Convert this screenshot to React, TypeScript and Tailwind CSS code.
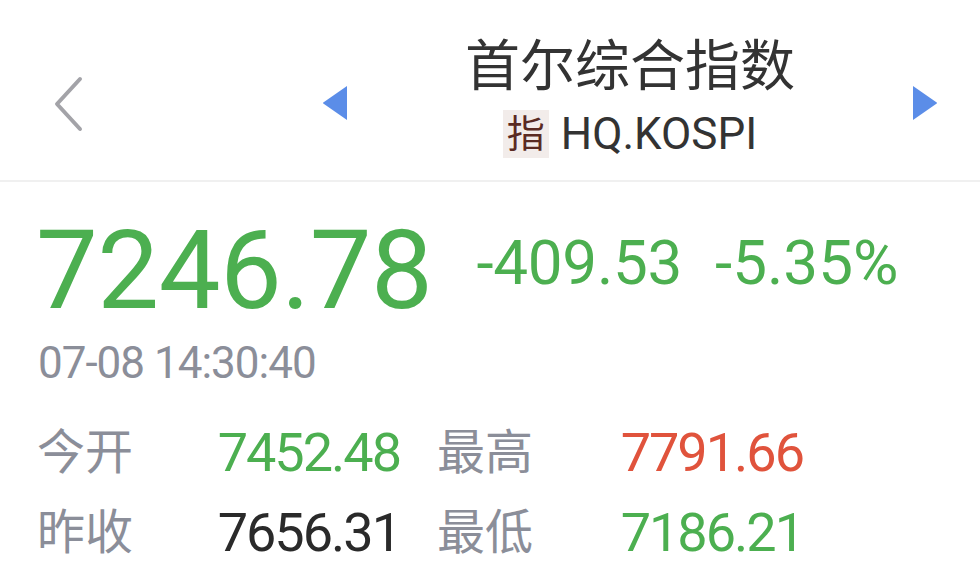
const FONT = { fontFamily: 'Roboto, "Noto Sans CJK SC", sans-serif' };

type Cell = { label: string; value: string; color: string };

const rows: [Cell, Cell][] = [
  [
    { label: '今开', value: '7452.48', color: 'text-[#4caf50]' },
    { label: '最高', value: '7791.66', color: 'text-[#e0533c]' },
  ],
  [
    { label: '昨收', value: '7656.31', color: 'text-[#2a2a2a]' },
    { label: '最低', value: '7186.21', color: 'text-[#4caf50]' },
  ],
];

function Triangle({ dir }: { dir: 'left' | 'right' }) {
  return (
    <svg width="26" height="36" viewBox="0 0 26 36">
      {dir === 'left' ? (
        <path d="M25 1 L25 35 L2 19 Q0 18 2 17 Z" fill="#5b8de8" />
      ) : (
        <path d="M1 1 L1 35 L24 19 Q26 18 24 17 Z" fill="#5b8de8" />
      )}
    </svg>
  );
}

function BackArrow() {
  return (
    <svg width="32" height="56" viewBox="0 0 32 56" fill="none">
      <polyline
        points="27,3 4,28 27,53"
        stroke="#a3a3a8"
        strokeWidth="4"
        strokeLinecap="round"
        strokeLinejoin="round"
      />
    </svg>
  );
}

export default function App() {
  return (
    <div className="w-[980px] min-h-[564px] bg-white" style={FONT}>
      {/* 顶部标题栏 */}
      <div className="h-[182px] flex items-start border-b-2 border-[#f0f0f0]">
        <div className="w-[322px] pl-[53px] pt-[76px]">
          <BackArrow />
        </div>
        <div className="pt-[85px]">
          <Triangle dir="left" />
        </div>
        <div className="flex-1 flex flex-col items-center pt-[31px]">
          <div className="text-[55px] leading-[70px] text-[#333]">首尔综合指数</div>
          <div className="flex items-center gap-[12px] mt-[9px]">
            <span className="bg-[#f2ecea] text-[#5a2a22] text-[38px] leading-[48px] px-[4px]">指</span>
            <span className="text-[44px] leading-[48px] text-[#333]">HQ.KOSPI</span>
          </div>
        </div>
        <div className="w-[68px] pt-[85px] flex">
          <Triangle dir="right" />
        </div>
      </div>

      {/* 最新价 */}
      <div className="pl-[36px] pt-[34px] flex items-baseline">
        <span className="text-[110px] leading-[110px] text-[#4caf50] tracking-[-0.5px]">7246.78</span>
        <span className="ml-[44px] text-[62px] leading-[62px] text-[#4caf50] tracking-[-0.3px] relative -top-[24px]">-409.53</span>
        <span className="ml-[33px] text-[62px] leading-[62px] text-[#4caf50] relative -top-[24px]">-5.35%</span>
      </div>
      <div className="pl-[38px] mt-[13px] text-[44px] leading-[48px] text-[#8b8e99] tracking-[-1px]">07-08 14:30:40</div>

      {/* 开高收低 */}
      <div className="pl-[37px] mt-[40px] flex flex-col gap-[28px]">
        {rows.map((row, i) => (
          <div key={i} className="flex items-center h-[52px]">
            {row.map((c, j) => (
              <div key={j} className={`flex items-center ${j === 0 ? 'w-[363px]' : 'ml-[37px] w-[366px]'}`}>
                <span className="text-[48px] leading-[52px] text-[#8b8e99]">{c.label}</span>
                <span className={`ml-auto text-[54px] leading-[52px] tracking-[-2px] ${c.color}`}>{c.value}</span>
              </div>
            ))}
          </div>
        ))}
      </div>
    </div>
  );
}
